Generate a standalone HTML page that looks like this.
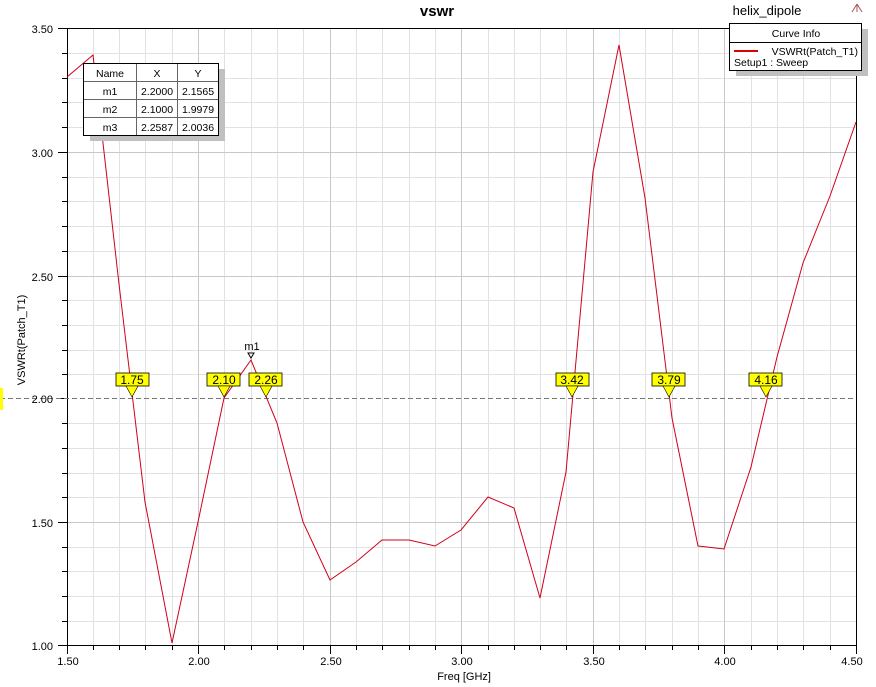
<!DOCTYPE html>
<html><head><style>body{margin:0;background:#fff;}svg{display:block;font-family:"Liberation Sans",Arial,sans-serif;}</style></head><body>
<svg width="876" height="687" viewBox="0 0 876 687" xmlns="http://www.w3.org/2000/svg">
<rect width="876" height="687" fill="#fff"/>
<g stroke="#e2e2e2" stroke-width="1">
<!-- minor verticals -->
<path d="M93.5 28V645M119.5 28V645M145.5 28V645M172.5 28V645M224.5 28V645M251.5 28V645M277.5 28V645M303.5 28V645M356.5 28V645M382.5 28V645M409.5 28V645M435.5 28V645M488.5 28V645M514.5 28V645M540.5 28V645M566.5 28V645M619.5 28V645M645.5 28V645M672.5 28V645M698.5 28V645M751.5 28V645M777.5 28V645M803.5 28V645M830.5 28V645"/>
<path d="M67 53.5H856M67 78.5H856M67 102.5H856M67 127.5H856M67 177.5H856M67 201.5H856M67 226.5H856M67 251.5H856M67 300.5H856M67 325.5H856M67 350.5H856M67 374.5H856M67 423.5H856M67 448.5H856M67 473.5H856M67 497.5H856M67 547.5H856M67 571.5H856M67 596.5H856M67 621.5H856"/>
</g>
<g stroke="#c8c8c8" stroke-width="1">
<path d="M198.5 28V645M330.5 28V645M461.5 28V645M593.5 28V645M724.5 28V645"/>
<path d="M67 152.5H856M67 276.5H856M67 522.5H856"/>
</g>
<rect x="67.5" y="28.5" width="789" height="617" fill="none" stroke="#000"/>
<g stroke="#000"><path d="M58 28.5H67M58 152.5H67M58 276.5H67M58 398.5H67M58 522.5H67M58 645.5H67M62 53.5H67M62 78.5H67M62 102.5H67M62 127.5H67M62 177.5H67M62 201.5H67M62 226.5H67M62 251.5H67M62 300.5H67M62 325.5H67M62 350.5H67M62 374.5H67M62 423.5H67M62 448.5H67M62 473.5H67M62 497.5H67M62 547.5H67M62 571.5H67M62 596.5H67M62 621.5H67"/>
<path d="M67.5 645V654M93.5 645V650M119.5 645V650M145.5 645V650M172.5 645V650M198.5 645V654M224.5 645V650M251.5 645V650M277.5 645V650M303.5 645V650M330.5 645V654M356.5 645V650M382.5 645V650M409.5 645V650M435.5 645V650M461.5 645V654M488.5 645V650M514.5 645V650M540.5 645V650M566.5 645V650M593.5 645V654M619.5 645V650M645.5 645V650M672.5 645V650M698.5 645V650M724.5 645V654M751.5 645V650M777.5 645V650M803.5 645V650M830.5 645V650M856.5 645V654"/></g>
<line x1="0" y1="398.5" x2="856" y2="398.5" stroke="#777" stroke-dasharray="5,3"/>
<rect x="0" y="388" width="3" height="22" fill="#ff0"/>
<polyline fill="none" stroke="#d0001a" stroke-width="1" points="67,77 93,55 119,284 145,502 172,643 198,522 224,398 251,360 277,423 303,522 330,580 356,562 382,540 409,540 435,546 461,530 488,497 514,508 540,598 566,472 593,172 619,45 645,198 672,418 698,546 724,549 751,467 777,357 803,263 830,196 856,122"/>
<g font-size="11" fill="#000" text-anchor="end">
<text x="53" y="33">3.50</text><text x="53" y="157">3.00</text><text x="53" y="281">2.50</text><text x="53" y="403">2.00</text><text x="53" y="527">1.50</text><text x="53" y="650">1.00</text>
</g>
<g font-size="11" text-anchor="middle">
<text x="68" y="665">1.50</text><text x="199" y="665">2.00</text><text x="331" y="665">2.50</text><text x="462" y="665">3.00</text><text x="594" y="665">3.50</text><text x="725" y="665">4.00</text><text x="852" y="665">4.50</text>
</g>
<text x="491" y="680" font-size="11" text-anchor="end">Freq [GHz]</text>
<text transform="translate(25,340) rotate(-90)" font-size="11" text-anchor="middle">VSWRt(Patch_T1)</text>
<text x="437" y="16" font-size="15" font-weight="bold" text-anchor="middle">vswr</text>
<text x="767" y="15" font-size="13" text-anchor="middle">helix_dipole</text>
<path d="M857 4L852 12M857 4L862 12M857 4V12" stroke="#a55" fill="none"/>
<!-- marker m1 -->
<text x="252" y="350" font-size="11" text-anchor="middle">m1</text>
<path d="M248 353H254L251 358Z" fill="#fff" stroke="#000"/>
<!-- yellow markers -->
<g font-size="12" text-anchor="middle">
<g><rect x="116" y="373" width="33" height="13" fill="#ff0" stroke="#000" stroke-width="0.8"/><path d="M126 386L132 397L138 386Z" fill="#ff0" stroke="#000" stroke-width="0.6"/><text x="132" y="384">1.75</text></g>
<g><rect x="207" y="373" width="33" height="13" fill="#ff0" stroke="#000" stroke-width="0.8"/><path d="M218 386L224 397L230 386Z" fill="#ff0" stroke="#000" stroke-width="0.6"/><text x="224" y="384">2.10</text></g>
<g><rect x="249" y="373" width="33" height="13" fill="#ff0" stroke="#000" stroke-width="0.8"/><path d="M260 386L266 397L272 386Z" fill="#ff0" stroke="#000" stroke-width="0.6"/><text x="266" y="384">2.26</text></g>
<g><rect x="556" y="373" width="33" height="13" fill="#ff0" stroke="#000" stroke-width="0.8"/><path d="M566 386L572 397L578 386Z" fill="#ff0" stroke="#000" stroke-width="0.6"/><text x="572" y="384">3.42</text></g>
<g><rect x="652" y="373" width="33" height="13" fill="#ff0" stroke="#000" stroke-width="0.8"/><path d="M663 386L669 397L675 386Z" fill="#ff0" stroke="#000" stroke-width="0.6"/><text x="669" y="384">3.79</text></g>
<g><rect x="749" y="373" width="33" height="13" fill="#ff0" stroke="#000" stroke-width="0.8"/><path d="M760 386L766 397L772 386Z" fill="#ff0" stroke="#000" stroke-width="0.6"/><text x="766" y="384">4.16</text></g>
</g>
<!-- table -->
<rect x="90" y="69" width="135" height="72" fill="#c0c0c0"/>
<rect x="83.5" y="63.5" width="135" height="72" fill="#fff" stroke="#000"/>
<g stroke="#666"><path d="M136.5 64V135M177.5 64V135M84 81.5H218M84 99.5H218M84 117.5H218"/></g>
<g font-size="10.5" text-anchor="middle">
<text x="110" y="77">Name</text><text x="157" y="77">X</text><text x="198" y="77">Y</text>
<text x="110" y="95">m1</text><text x="157" y="95">2.2000</text><text x="198" y="95">2.1565</text>
<text x="110" y="113">m2</text><text x="157" y="113">2.1000</text><text x="198" y="113">1.9979</text>
<text x="110" y="131">m3</text><text x="157" y="131">2.2587</text><text x="198" y="131">2.0036</text>
</g>
<!-- legend -->
<rect x="736" y="29" width="132" height="47" fill="#c0c0c0"/>
<rect x="729.5" y="23.5" width="132" height="47" fill="#fff" stroke="#000"/>
<line x1="730" y1="42.5" x2="861" y2="42.5" stroke="#000"/>
<text x="796" y="37" font-size="10.5" text-anchor="middle">Curve Info</text>
<line x1="734" y1="51" x2="758" y2="51" stroke="#d00" stroke-width="2"/>
<text x="858" y="55" font-size="10.5" text-anchor="end">VSWRt(Patch_T1)</text>
<text x="734" y="66" font-size="10.5">Setup1 : Sweep</text>
</svg>
</body></html>
